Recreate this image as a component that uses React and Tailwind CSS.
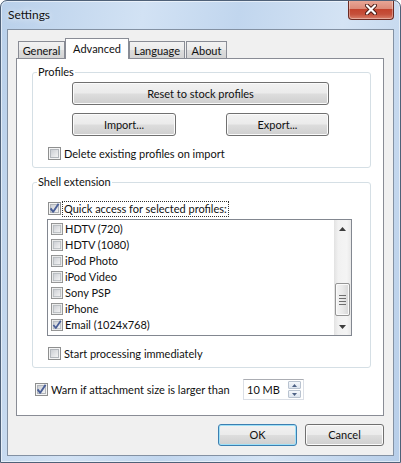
import React from "react";

function Check({ checked = false, size = 13 }) {
  return (
    <svg width={size} height={size} viewBox="0 0 13 13" className="shrink-0 block">
      <defs>
        <linearGradient id="cbgrad" x1="0" y1="0" x2="1" y2="1">
          <stop offset="0" stopColor="#c9ccd1" />
          <stop offset="1" stopColor="#f6f6f6" />
        </linearGradient>
      </defs>
      <rect x="0.5" y="0.5" width="12" height="12" fill="#f4f4f4" stroke="#8e8f8f" />
      <rect x="2.5" y="2.5" width="8" height="8" fill="url(#cbgrad)" stroke="#b2b6bb" />
      {checked && (
        <path d="M2.6 6.4 L5.2 9.8 L10.6 1.8" fill="none" stroke="#4a5f97" strokeWidth="1.9" strokeLinejoin="round" />
      )}
    </svg>
  );
}

function Button({ children, className = "", isDefault = false }) {
  return (
    <div
      className={
        "flex items-center justify-center rounded-[3px] border " +
        (isDefault
          ? "border-[#3c7fb1] shadow-[inset_0_0_0_1px_#9fe0f7] "
          : "border-[#707070] shadow-[inset_0_0_0_1px_#fbfbfb] ") +
        "bg-[linear-gradient(#f2f2f2_0%,#ebebeb_48%,#dddddd_52%,#cfcfcf_100%)] " +
        className
      }
    >
      {children}
    </div>
  );
}

function Tab({ children, active = false, className = "" }) {
  if (active) {
    return (
      <div
        className={
          "relative z-10 -mb-px flex h-[21px] items-start justify-center border border-b-0 border-[#898c95] bg-white pt-[2px] " +
          className
        }
      >
        {children}
      </div>
    );
  }
  return (
    <div
      className={
        "flex h-[17px] items-center justify-center border border-b-0 border-[#898c95] bg-[linear-gradient(#f2f2f2_0%,#ebebeb_48%,#dddddd_52%,#d4d4d4_100%)] pt-[1px] " +
        className
      }
    >
      {children}
    </div>
  );
}

function GroupBox({ label, className = "", children }) {
  return (
    <div className={"relative rounded-[3px] border border-[#d5dfe5] " + className}>
      <span className="absolute left-[4px] top-[-9px] bg-white px-[1px] leading-[16px]">{label}</span>
      {children}
    </div>
  );
}

function Tri({ up = true }) {
  return (
    <svg width="7" height="4" viewBox="0 0 7 4" className="block">
      {up ? <path d="M0 4 L3.5 0 L7 4 Z" fill="#3c3c3c" /> : <path d="M0 0 L7 0 L3.5 4 Z" fill="#3c3c3c" />}
    </svg>
  );
}

const profiles = [
  ["HDTV (720)", false],
  ["HDTV (1080)", false],
  ["iPod Photo", false],
  ["iPod Video", false],
  ["Sony PSP", false],
  ["iPhone", false],
  ["Email (1024x768)", true],
];

export default function App() {
  return (
    <div className="relative h-[463px] w-[401px] overflow-hidden whitespace-nowrap rounded-t-[7px] border border-[#4f6178] bg-[linear-gradient(100deg,#b9d0ea_0%,#d2e2f4_30%,#c1d6ee_50%,#d4e3f4_72%,#b7cee9_100%)] font-['Lato',sans-serif] text-[11px] leading-[16px] text-[#111] shadow-[inset_0_0_0_1px_rgba(255,255,255,0.55)]">
      {/* title bar */}
      <div className="flex h-[28px] items-start justify-between">
        <span className="ml-[7px] mt-[6px] text-[12px] [text-shadow:0_0_6px_rgba(255,255,255,0.95)]">Settings</span>
        <div className="mr-[6px] -mt-px flex h-[20px] w-[46px] items-center justify-center rounded-b-[4px] border border-t-0 border-[#6b2a22] bg-[linear-gradient(#e9a999_0%,#dc8b79_45%,#c3442e_50%,#c5503b_75%,#d9806b_100%)] shadow-[inset_0_0_0_1px_rgba(255,255,255,0.35)]">
          <svg width="12" height="11" viewBox="0 0 12 11">
            <path d="M2 1.5 L10 9.5 M10 1.5 L2 9.5" stroke="#4a1a13" strokeWidth="4" strokeLinecap="round" />
            <path d="M2 1.5 L10 9.5 M10 1.5 L2 9.5" stroke="#ffffff" strokeWidth="2.2" strokeLinecap="round" />
          </svg>
        </div>
      </div>

      {/* client area */}
      <div className="ml-[6px] flex h-[427px] w-[387px] flex-col border border-[#8391a3] bg-[#f0f0f0]">
        {/* tabs */}
        <div className="flex h-[28px] items-end pl-[10px]">
          <Tab className="w-[47px]">General</Tab>
          <Tab active className="w-[64px]">Advanced</Tab>
          <Tab className="w-[56px]">Language</Tab>
          <Tab className="ml-[1px] w-[41px]">About</Tab>
        </div>

        {/* panel */}
        <div className="ml-[8px] flex h-[358px] w-[368px] flex-col border border-[#898c95] bg-white">
          <GroupBox label="Profiles" className="ml-[15px] mt-[13px] h-[96px] w-[339px]">
            <div className="flex flex-col pt-[9px]">
              <Button className="ml-[39px] h-[23px] w-[257px]">Reset to stock profiles</Button>
              <div className="ml-[39px] mt-[8px] flex w-[257px] justify-between">
                <Button className="h-[23px] w-[104px]">Import...</Button>
                <Button className="h-[23px] w-[103px]">Export...</Button>
              </div>
              <div className="ml-[15px] mt-[11px] flex h-[13px] items-center">
                <Check />
                <span className="ml-[3px]">Delete existing profiles on import</span>
              </div>
            </div>
          </GroupBox>

          <GroupBox label="Shell extension" className="ml-[15px] mt-[14px] h-[186px] w-[339px]">
            <div className="flex flex-col pt-[19px]">
              <div className="ml-[15px] flex h-[13px] items-center">
                <Check checked />
                <span className="ml-[1px] border border-dotted border-[#333] px-[1px] leading-[14px]">
                  Quick access for selected profiles:
                </span>
              </div>
              <div className="ml-[14px] mt-[4px] flex h-[117px] w-[305px] border border-[#828790] bg-white">
                <div className="flex flex-1 flex-col pt-[1px]">
                  {profiles.map(([name, on]) => (
                    <div key={name} className="flex h-[16px] items-center pl-[3px]">
                      <Check checked={on} size={12} />
                      <span className="ml-[2px]">{name}</span>
                    </div>
                  ))}
                </div>
                <div className="flex w-[17px] flex-col bg-[linear-gradient(90deg,#e2e2e2,#f1f1f1_25%,#f4f4f4_75%,#e8e8e8)]">
                  <div className="flex h-[17px] items-center justify-center">
                    <Tri up />
                  </div>
                  <div className="h-[46px]" />
                  <div className="mx-px flex h-[33px] flex-col items-center justify-center gap-[2px] rounded-[2px] border border-[#959595] bg-[linear-gradient(90deg,#f4f4f4,#e9e9e9_50%,#d6d6d6)] shadow-[inset_0_0_0_1px_#fafafa]">
                    <div className="h-px w-[7px] bg-[#6e6e6e]" />
                    <div className="h-px w-[7px] bg-[#6e6e6e]" />
                    <div className="h-px w-[7px] bg-[#6e6e6e]" />
                    <div className="h-px w-[7px] bg-[#6e6e6e]" />
                  </div>
                  <div className="h-[2px]" />
                  <div className="flex h-[17px] items-center justify-center">
                    <Tri up={false} />
                  </div>
                </div>
              </div>
              <div className="ml-[15px] mt-[11px] flex h-[13px] items-center">
                <Check />
                <span className="ml-[3px]">Start processing immediately</span>
              </div>
            </div>
          </GroupBox>

          <div className="ml-[18px] mt-[11px] flex h-[21px] items-center">
            <div className="flex w-[208px] items-center">
              <Check checked />
              <span className="ml-[3px]">Warn if attachment size is larger than</span>
            </div>
            <div className="flex h-[21px] w-[61px] items-center justify-between border border-[#dbdfe6] border-t-[#abadb3] bg-white pl-[3px] pr-[2px]">
              <span>10 MB</span>
              <div className="flex flex-col gap-[1px]">
                <div className="flex h-[8px] w-[13px] items-center justify-center rounded-[1px] border border-[#b9c3d0] bg-[linear-gradient(#f4f7fb,#dde5ef)]">
                  <svg width="5" height="3" viewBox="0 0 5 3"><path d="M0 3 L2.5 0 L5 3 Z" fill="#4d6185" /></svg>
                </div>
                <div className="flex h-[8px] w-[13px] items-center justify-center rounded-[1px] border border-[#b9c3d0] bg-[linear-gradient(#f4f7fb,#dde5ef)]">
                  <svg width="5" height="3" viewBox="0 0 5 3"><path d="M0 0 L5 0 L2.5 3 Z" fill="#4d6185" /></svg>
                </div>
              </div>
            </div>
          </div>
        </div>

        {/* buttons */}
        <div className="mt-[8px] flex justify-end gap-[8px] pr-[9px]">
          <Button isDefault className="h-[22px] w-[79px]">OK</Button>
          <Button className="h-[22px] w-[79px]">Cancel</Button>
        </div>
      </div>
    </div>
  );
}
